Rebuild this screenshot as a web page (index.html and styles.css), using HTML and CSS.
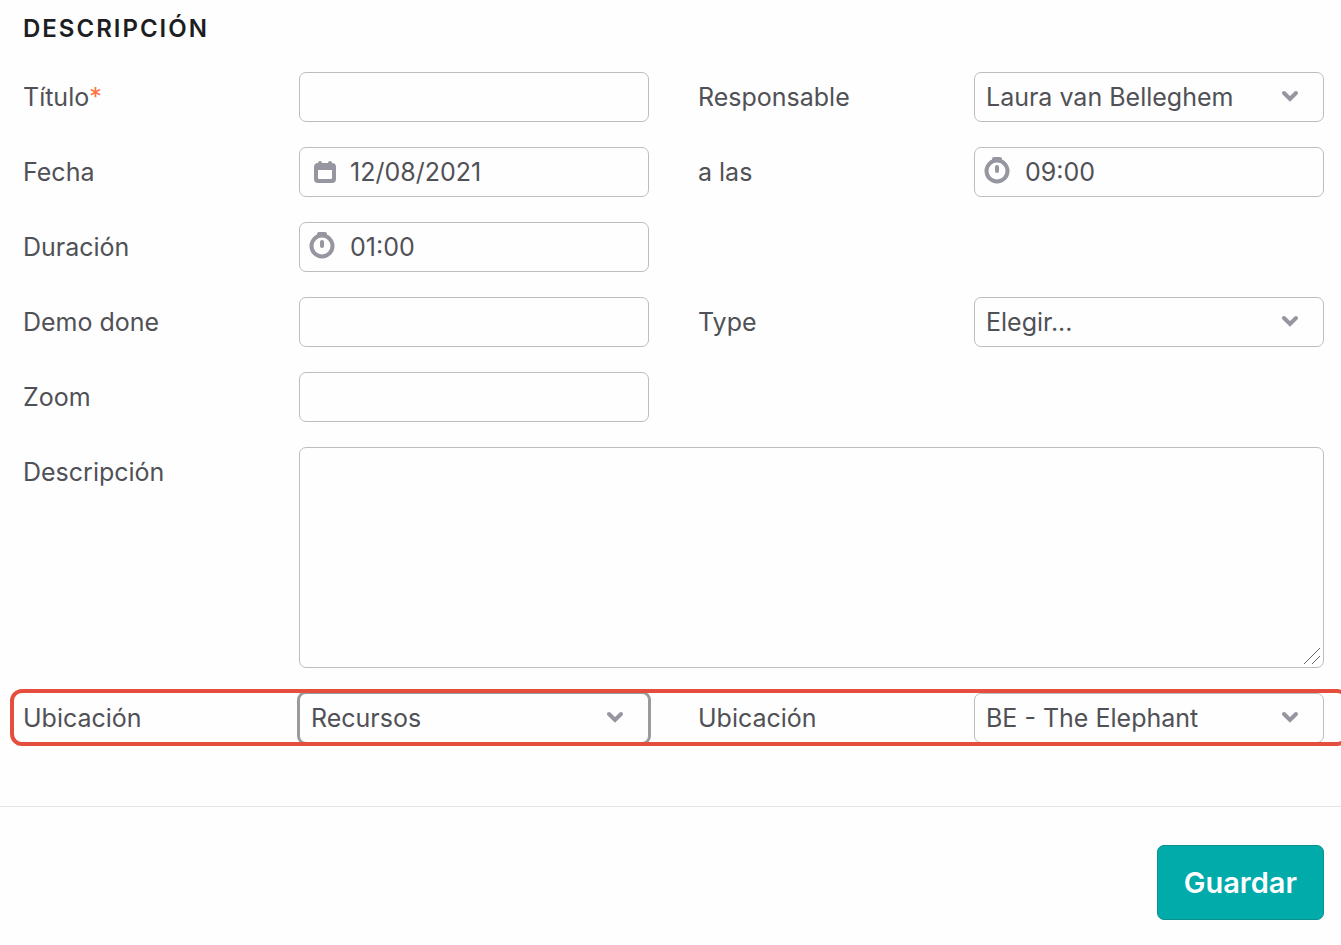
FILE: index.html
```html
<!DOCTYPE html>
<html lang="es">
<head>
<meta charset="utf-8">
<meta name="viewport" content="width=device-width, initial-scale=1">
<title>Descripción</title>
<link rel="stylesheet" href="styles.css">
</head>
<body>
<svg class="symbols" aria-hidden="true">
  <symbol id="chevron" viewBox="0 0 18 12"><path d="M3 3l6 6 6-6" fill="none" stroke="currentColor" stroke-width="4" stroke-linecap="round" stroke-linejoin="miter"/></symbol>
  <symbol id="calendar" viewBox="0 0 22 22"><path fill="currentColor" fill-rule="evenodd" d="M4 2a2 2 0 0 1 4 0h6a2 2 0 0 1 4 0a4 4 0 0 1 4 4v12a4 4 0 0 1-4 4H4a4 4 0 0 1-4-4V6a4 4 0 0 1 4-4zM4 9v8q0 1 1 1h12q1 0 1-1V9z"/></symbol>
  <symbol id="stopwatch" viewBox="0 0 26 28"><path d="M8 5V3q0-2 2-2h6q2 0 2 2v2z" fill="currentColor"/><circle cx="13" cy="15" r="10.5" fill="none" stroke="currentColor" stroke-width="4"/><path d="M13 11v4" stroke="currentColor" stroke-width="4" stroke-linecap="round"/></symbol>
</svg>
<form class="form">
  <section class="section">
    <h1 class="heading">DESCRIPCIÓN</h1>
    <div class="row">
      <div class="field">
        <label class="label" for="title">Título<span class="required">*</span></label>
        <input class="control" id="title" type="text">
      </div>
      <div class="field">
        <label class="label" for="owner">Responsable</label>
        <div class="box">
          <select class="control" id="owner"><option>Laura van Belleghem</option></select>
          <svg class="chevron"><use href="#chevron"/></svg>
        </div>
      </div>
    </div>
    <div class="row">
      <div class="field">
        <label class="label" for="date">Fecha</label>
        <div class="box">
          <input class="control with-icon" id="date" type="text" value="12/08/2021">
          <svg class="calendar"><use href="#calendar"/></svg>
        </div>
      </div>
      <div class="field">
        <label class="label" for="time">a las</label>
        <div class="box">
          <input class="control with-icon" id="time" type="text" value="09:00">
          <svg class="stopwatch"><use href="#stopwatch"/></svg>
        </div>
      </div>
    </div>
    <div class="row">
      <div class="field">
        <label class="label" for="duration">Duración</label>
        <div class="box">
          <input class="control with-icon" id="duration" type="text" value="01:00">
          <svg class="stopwatch"><use href="#stopwatch"/></svg>
        </div>
      </div>
    </div>
    <div class="row">
      <div class="field">
        <label class="label" for="demo">Demo done</label>
        <input class="control" id="demo" type="text">
      </div>
      <div class="field">
        <label class="label" for="type">Type</label>
        <div class="box">
          <select class="control" id="type"><option>Elegir...</option></select>
          <svg class="chevron"><use href="#chevron"/></svg>
        </div>
      </div>
    </div>
    <div class="row">
      <div class="field">
        <label class="label" for="zoom">Zoom</label>
        <input class="control" id="zoom" type="text">
      </div>
    </div>
    <div class="field">
      <label class="label" for="description">Descripción</label>
      <div class="box">
        <textarea class="control area" id="description"></textarea>
        <svg class="grip" viewBox="0 0 18 18"><path d="M1 17L17 1M9 17l8-8" fill="none" stroke="currentColor"/></svg>
      </div>
    </div>
    <div class="row marked">
      <div class="field">
        <label class="label" for="place-kind">Ubicación</label>
        <div class="box">
          <select class="control active" id="place-kind"><option>Recursos</option></select>
          <svg class="chevron"><use href="#chevron"/></svg>
        </div>
      </div>
      <div class="field">
        <label class="label" for="place">Ubicación</label>
        <div class="box">
          <select class="control" id="place"><option>BE - The Elephant</option></select>
          <svg class="chevron"><use href="#chevron"/></svg>
        </div>
      </div>
    </div>
  </section>
  <footer class="footer">
    <button class="save" type="button">Guardar</button>
  </footer>
</form>
</body>
</html>
```
FILE: styles.css
```css
* {
  box-sizing: border-box;
}

body {
  margin: 0;
  background: #fefefe;
  color: #505156;
  font: 400 25px/50px Inter, sans-serif;
  overflow-x: hidden;
}

.symbols {
  display: none;
}

.form {
  overflow: hidden;
}

.section {
  display: flex;
  flex-direction: column;
  gap: 25px;
  padding: 12px 17px 63px 23px;
}

.heading {
  margin: 0 0 2px;
  color: #1c1e23;
  font-size: 24px;
  font-weight: 600;
  line-height: 33px;
  letter-spacing: 2px;
}

.row {
  display: grid;
  grid-template-columns: 1fr 1fr;
  gap: 49px;
}

.field {
  display: grid;
  grid-template-columns: 276px 1fr;
}

.required {
  color: #ff7043;
}

.box {
  position: relative;
  display: flex;
}

.control {
  display: block;
  width: 100%;
  height: 50px;
  margin: 0;
  padding: 0 11px;
  border: 1px solid #bdbdbf;
  border-radius: 7px;
  outline: none;
  background: #fefefe;
  color: inherit;
  font: inherit;
  line-height: 48px;
  appearance: none;
}

.with-icon {
  padding-left: 50px;
}

.area {
  height: 221px;
  resize: none;
}

.active {
  border-color: #999a9b;
  box-shadow: 0 0 0 2px #999a9b;
}

.chevron,
.calendar,
.stopwatch,
.grip {
  position: absolute;
  pointer-events: none;
  color: #9696a0;
}

.chevron {
  top: 18px;
  right: 25px;
  width: 18px;
  height: 12px;
}

.calendar {
  top: 14px;
  left: 15px;
  width: 22px;
  height: 22px;
}

.stopwatch {
  top: 9px;
  left: 10px;
  width: 26px;
  height: 28px;
}

.grip {
  right: 3px;
  bottom: 3px;
  width: 18px;
  height: 18px;
  color: #66676a;
}

.marked {
  position: relative;
}

/* Highlight frame lies over the row and runs off the right edge. */
.marked::after {
  content: "";
  position: absolute;
  inset: -4px -25px -3px -13px;
  border: 4px solid #e54d3c;
  border-radius: 12px;
  pointer-events: none;
}

.footer {
  display: flex;
  justify-content: flex-end;
  padding: 38px 17px 25px;
  border-top: 1px solid #e3e3e4;
}

.save {
  height: 75px;
  padding: 0 26px;
  border: 1px solid #0b918f;
  border-radius: 7px;
  background: #00abaa;
  color: #fefefe;
  font: 600 29px/73px Inter, sans-serif;
}
```
